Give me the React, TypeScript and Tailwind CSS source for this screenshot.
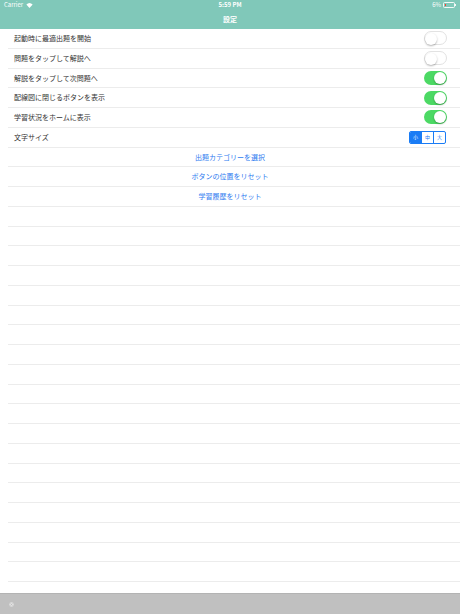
import React from 'react';

const jp = { fontFamily: '"Noto Sans CJK JP", "Noto Sans", sans-serif' };

const toggles: { label: string; on: boolean }[] = [
  { label: '起動時に最適出題を開始', on: false },
  { label: '問題をタップして解説へ', on: false },
  { label: '解説をタップして次問題へ', on: true },
  { label: '配線図に閉じるボタンを表示', on: true },
  { label: '学習状況をホームに表示', on: true },
];

const actions = ['出題カテゴリーを選択', 'ボタンの位置をリセット', '学習履歴をリセット'];

function Switch({ on }: { on: boolean }) {
  return (
    <div
      className={`relative h-[14px] w-[23px] rounded-full ${
        on ? 'bg-[#4cd964]' : 'bg-white border border-[#e2e2e2]'
      }`}
    >
      <div
        className={`absolute top-[1px] h-[12px] w-[12px] rounded-full bg-white shadow-[0_1px_2px_rgba(0,0,0,0.3)] ${
          on ? 'right-[1px]' : 'left-[0px] top-[0px]'
        }`}
      />
    </div>
  );
}

function Row({ children, className = '' }: { children?: React.ReactNode; className?: string }) {
  return (
    <div className={`h-[19.75px] ml-[8px] border-b border-[#ececec] flex items-center ${className}`}>
      {children}
    </div>
  );
}

export default function App() {
  return (
    <div className="w-[460px] h-[614px] bg-white flex flex-col overflow-hidden" style={jp}>
      {/* status bar + nav */}
      <div className="h-[29px] bg-[#80c8b9] text-white flex flex-col">
        <div className="h-[10px] flex items-center justify-between px-[4px] text-[6px] leading-none">
          <div className="flex items-center gap-[3px] w-[80px]">
            <span>Carrier</span>
            <svg width="7" height="5" viewBox="0 0 10 7">
              <path d="M5 7 L0.5 2.2 A6.5 6.5 0 0 1 9.5 2.2 Z" fill="white" />
            </svg>
          </div>
          <span className="font-semibold">5:59 PM</span>
          <div className="flex items-center justify-end gap-[2px] w-[80px]">
            <span>6%</span>
            <div className="flex items-center">
              <div className="w-[12px] h-[6px] rounded-[1.5px] border border-white/90 p-[1px] flex">
                <div className="w-[1px] h-full bg-[#ff3b30]" />
              </div>
              <div className="w-[1px] h-[2px] bg-white/90" />
            </div>
          </div>
        </div>
        <div className="flex-1 flex items-center justify-center text-[7px] font-semibold pb-[1px]">設定</div>
      </div>

      {/* settings list */}
      <div className="flex-1 flex flex-col">
        {toggles.map((t) => (
          <Row key={t.label} className="justify-between pl-[6px] pr-[13px]">
            <span className="text-[7px] text-[#333]">{t.label}</span>
            <Switch on={t.on} />
          </Row>
        ))}
        <Row className="justify-between pl-[6px] pr-[14px]">
          <span className="text-[7px] text-[#333]">文字サイズ</span>
          <div className="flex h-[13px] w-[37px] border border-[#1a7cf5] rounded-[2px] overflow-hidden text-[5px]">
            <div className="flex-1 bg-[#1a7cf5] text-white flex items-center justify-center">小</div>
            <div className="flex-1 text-[#1a7cf5] flex items-center justify-center border-l border-[#1a7cf5]">中</div>
            <div className="flex-1 text-[#1a7cf5] flex items-center justify-center border-l border-[#1a7cf5]">大</div>
          </div>
        </Row>
        {actions.map((a) => (
          <Row key={a} className="justify-center pr-[8px]">
            <span className="text-[7px] text-[#2f7cf0]">{a}</span>
          </Row>
        ))}
        {Array.from({ length: 19 }).map((_, i) => (
          <Row key={i} />
        ))}
      </div>

      {/* bottom toolbar */}
      <div className="h-[21px] bg-[#c0c0c0] border-t border-[#b3b3b3] flex items-center px-[9px]">
        <svg width="5" height="5" viewBox="0 0 10 10">
          <circle cx="5" cy="5" r="4.5" fill="#e0e0e0" />
          <path d="M3 3 L7 7 M7 3 L3 7" stroke="#b8b8b8" strokeWidth="1.2" />
        </svg>
      </div>
    </div>
  );
}
